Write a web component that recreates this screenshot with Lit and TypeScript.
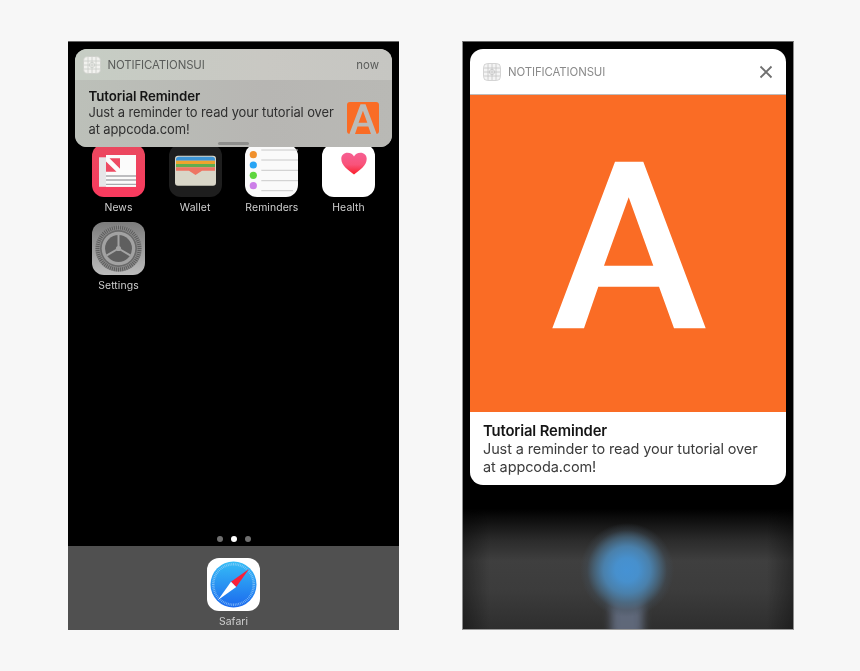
import { LitElement, html, css, svg } from "lit";
import { customElement } from "lit/decorators.js";

const logoA = (fill: string) => svg`<path fill=${fill} fill-rule="evenodd" d="M615 161.700H643.300L705.700 328.300H674L659 286.700H598.300L584 328.300H552.300ZM628.700 197.300L604 265.700H653.300Z"/>`;

const gridIcon = (stroke: string, bg: string) => html`<svg class="app-ico" viewBox="0 0 18 18">
  <rect x=".5" y=".5" width="17" height="17" rx="4" fill=${bg} stroke=${stroke} stroke-width=".7"/>
  <g fill="none" stroke=${stroke} stroke-width=".8">
    <path d="M5 1V17M9 1V17M13 1V17M1 5H17M1 9H17M1 13H17"/>
    <circle cx="9" cy="9" r="2.6"/>
  </g>
</svg>`;

const ticks = (cx: number, cy: number, r1: number, r2: number, n: number, color: string, w: number) => {
  const out = [];
  for (let i = 0; i < n; i++) {
    const a = (i / n) * Math.PI * 2;
    out.push(svg`<line x1=${cx + Math.cos(a) * r1} y1=${cy + Math.sin(a) * r1} x2=${cx + Math.cos(a) * r2} y2=${cy + Math.sin(a) * r2} stroke=${color} stroke-width=${w}/>`);
  }
  return out;
};

const news = html`<svg class="ico" viewBox="0 0 53 53">
  <defs><linearGradient id="ng" x1="0" y1="0" x2="0" y2="1"><stop offset="0" stop-color="#e9495f"/><stop offset="1" stop-color="#f93a5e"/></linearGradient></defs>
  <rect width="53" height="53" rx="12" fill="url(#ng)"/>
  <rect x="7" y="13.300" width="37" height="29.500" fill="#e6e6e8"/>
  <rect x="14" y="11" width="30" height="31.800" fill="#fbfbfb"/>
  <path d="M14 17.500L24.500 27.700H14ZM17.500 14.300H28V24.800Z" fill="#ee4a63"/>
  <path d="M14 32H44M14 36H44M14 40.300H44" stroke="#a9a9ad" stroke-width="1.300"/>
</svg>`;

const wallet = html`<svg class="ico" viewBox="0 0 53 53">
  <rect width="53" height="53" rx="12" fill="#1e1e1e"/>
  <rect x="6" y="11.700" width="41" height="30" rx="3" fill="#d9d6c8"/>
  <path d="M7 16.700V15.500Q7 12.700 10 12.700H43Q46 12.700 46 15.500V16.700Z" fill="#3e95d5"/>
  <rect x="7" y="16.700" width="39" height="3.300" fill="#efa42e"/>
  <rect x="7" y="20" width="39" height="3.300" fill="#62ad4f"/>
  <path d="M7 23.300H46V26.700H33L26.500 31L20 26.700H7Z" fill="#ee7563"/>
</svg>`;

const reminders = html`<svg class="ico" viewBox="0 0 53 53">
  <rect width="53" height="53" rx="12" fill="#fafafa"/>
  <path d="M16.300 6H53M16.300 16H53M16.300 26.300H53M16.300 36.700H53M16.300 46.700H48" stroke="#c4c4c4" stroke-width=".9"/>
  <circle cx="8.300" cy="10.700" r="3.600" fill="#f0902c"/>
  <circle cx="8.300" cy="21" r="3.600" fill="#28a4f4"/>
  <circle cx="8.300" cy="31.300" r="3.600" fill="#5ed53e"/>
  <circle cx="8.300" cy="41.700" r="3.600" fill="#cc7ee8"/>
</svg>`;

const health = html`<svg class="ico" viewBox="0 0 53 53">
  <defs><linearGradient id="hg" x1="0" y1="0" x2="0" y2="1"><stop offset="0" stop-color="#f65f93"/><stop offset=".55" stop-color="#f9537a"/><stop offset="1" stop-color="#fb1e2a"/></linearGradient></defs>
  <rect width="53" height="53" rx="12" fill="#fff"/>
  <path d="M32 30.500C26 26 19.300 21.500 19.300 14.800C19.300 11 22 8.700 25.500 8.700C28.500 8.700 31 10 32 12.500C33 10 35.500 8.700 38.500 8.700C42 8.700 44.700 11 44.700 14.800C44.700 21.500 38 26 32 30.500Z" fill="url(#hg)"/>
</svg>`;

const settings = html`<svg class="ico" viewBox="0 0 53 53">
  <defs><linearGradient id="sg" x1="0" y1="0" x2="0" y2="1"><stop offset="0" stop-color="#7c7c7c"/><stop offset="1" stop-color="#bcbcbc"/></linearGradient></defs>
  <rect width="53" height="53" rx="12" fill="url(#sg)"/>
  <circle cx="26.500" cy="26.500" r="23.300" fill="#8f8f8f"/>
  ${ticks(26.5, 26.5, 19, 23, 64, "#5e5e5e", 1.1)}
  <circle cx="26.500" cy="26.500" r="18.500" fill="#6a6a6a"/>
  <circle cx="26.500" cy="26.500" r="16.800" fill="#a2a2a2"/>
  <circle cx="26.500" cy="26.500" r="13.500" fill="#5f5f5f"/>
  <path d="M26.500 26.500V13M26.500 26.500L14.800 33.300M26.500 26.500L38.200 33.300" stroke="#a4a4a4" stroke-width="2"/>
  <circle cx="26.500" cy="26.500" r="2.600" fill="#a4a4a4"/>
</svg>`;

const safari = html`<svg class="ico" viewBox="0 0 53 53">
  <defs><linearGradient id="bg" x1="0" y1="0" x2="0" y2="1"><stop offset="0" stop-color="#36bdf6"/><stop offset="1" stop-color="#1b69ee"/></linearGradient></defs>
  <rect width="53" height="53" rx="12" fill="#fff"/>
  <circle cx="26.500" cy="26.500" r="23" fill="url(#bg)"/>
  ${ticks(26.5, 26.5, 19, 21.5, 72, "#a9d6f8", 0.6)}
  <polygon points="42,11 24,23.800 29.200,29" fill="#f8203a"/>
  <polygon points="11,42 24,23.800 29.200,29" fill="#fff"/>
</svg>`;

@customElement("app-root")
export class AppRoot extends LitElement {
  static styles = css`
    :host { display: block; }
    .page {
      width: 860px; height: 671px; box-sizing: border-box;
      background: #f7f7f7; display: flex; gap: 63px;
      padding: 41px 0 0 68px;
      font-family: Inter, "Liberation Sans", sans-serif;
      filter: blur(0.3px);
    }
    .phone {
      width: 331px; height: 589px; box-sizing: border-box;
      border-top: 1px solid #666; background: #000;
      display: flex; flex-direction: column; position: relative; overflow: hidden;
    }
    .phone.framed {
      width: 332px;
      border-left: 1px solid #8c8c8c; border-right: 1px solid #8c8c8c; border-bottom: 1px solid #9a9a9a;
    }
    .banner {
      position: absolute; left: 7px; top: 7px; width: 317px; height: 98px;
      border-radius: 12px; overflow: hidden; z-index: 2;
      background: #b9b9b5; display: flex; flex-direction: column;
    }
    .bhead {
      height: 31px; flex: none; display: flex; align-items: center; gap: 7px;
      padding: 0 13px 0 7.500px; box-sizing: border-box;
      background: linear-gradient(90deg, #c6cdc4 0%, #c9c8c3 60%, #c6c6c2 100%);
      color: #5a5c5a; font-size: 11.400px;
    }
    .bhead .name { flex: 1; letter-spacing: -0.1px; }
    .bbody {
      flex: 1; display: flex; align-items: center; gap: 10px; padding: 0 13px 2px 13.500px;
      background: linear-gradient(90deg, #bcc0b9 0%, #b7b6b3 60%, #b9b9b5 100%);
    }
    .btext { flex: 1; font-size: 12.950px; line-height: 16.500px; color: #2f2f2f; letter-spacing: -0.1px; white-space: nowrap; }
    .btext b { font-size: 13.300px; font-weight: 600; color: #151515; display: block; }
    .ctext b { font-size: 14.800px; font-weight: 600; color: #151515; display: block; }
    .thumb { width: 32px; height: 32px; flex: none; border-radius: 3px; display: block; margin-top: 10px; background: #fa6c25; }
    .grabber {
      position: absolute; left: 143px; bottom: 2px; width: 31px; height: 3px;
      border-radius: 2px; background: #8e8e8c;
    }
    .home { flex: 1; display: flex; flex-direction: column; padding-top: 102px; }
    .grid {
      display: grid; grid-template-columns: repeat(4, 53px); column-gap: 23.700px; row-gap: 0;
      padding-left: 24px; flex: 1; align-content: start;
    }
    .app { width: 53px; height: 78px; display: flex; flex-direction: column; align-items: center; }
    .ico { width: 53px; height: 53px; display: block; flex: none; }
    .label {
      font-size: 10.400px; line-height: 14px; margin-top: 4px; color: #cfcfcf; white-space: nowrap;
      letter-spacing: 0.1px;
    }
    .dots { display: flex; justify-content: center; gap: 8px; height: 10px; }
    .dot { width: 6px; height: 6px; border-radius: 50%; background: #6f6f6f; }
    .dot.on { background: #fff; }
    .dock {
      height: 84px; flex: none; background: #505050; box-sizing: border-box;
      padding-top: 12px; display: flex; justify-content: center;
    }
    .dock .app { height: auto; }
    .card {
      position: relative; margin: 7px 7px 0; width: 316px; height: 436px; flex: none;
      border-radius: 13px; overflow: hidden; background: #fff;
      display: flex; flex-direction: column;
    }
    .chead {
      height: 45px; flex: none; display: flex; align-items: center; gap: 7px;
      padding: 0 13px; color: #8a8a8a; font-size: 11.400px;
      border-bottom: 1px solid #bcbcbc;
    }
    .chead .name { flex: 1; letter-spacing: -0.1px; }
    .close { width: 14px; height: 14px; display: block; }
    .hero { width: 316px; height: 317px; display: block; flex: none; background: #fa6c25; }
    .ctext { padding: 9.500px 13px 0 13px; font-size: 14.500px; line-height: 18px; color: #3c3c3c; letter-spacing: -0.12px; white-space: nowrap; }
    .app-ico { width: 18px; height: 18px; flex: none; display: block; }
    .glow {
      flex: 1; position: relative;
      background:
        linear-gradient(90deg, rgba(0,0,0,.35), rgba(0,0,0,0) 8%, rgba(0,0,0,0) 92%, rgba(0,0,0,.35)),
        linear-gradient(180deg, #000 0, #000 24px, #2b2b2b 55px, #3f3f3f 76px, #3c3c3c 105px, #2e2e2e 145px);
    }
    .stem {
      position: absolute; left: 148px; top: 90px; bottom: -10px; width: 32px;
      background: linear-gradient(180deg, #5f6a7e, #5f6778);
      filter: blur(4px);
    }
    .orb {
      position: absolute; left: 117px; top: 38px; width: 94px; height: 94px; border-radius: 50%;
      background: radial-gradient(circle closest-side, #4592d4 0%, #4790cd 25%, #4a80ab 50%, rgba(72,105,130,.8) 70%, rgba(66,80,92,.4) 85%, rgba(64,70,76,0) 100%);
    }
  `;

  private app(icon: unknown, label: string) {
    return html`<div class="app">${icon}<span class="label">${label}</span></div>`;
  }

  render() {
    return html`<div class="page">
      <section class="phone">
        <div class="banner">
          <div class="bhead">
            ${gridIcon("#c8ccc6", "#f2f2ef")}
            <span class="name">NOTIFICATIONSUI</span><span>now</span>
          </div>
          <div class="bbody">
            <div class="btext"><b>Tutorial Reminder</b>Just a reminder to read your tutorial over<br />at appcoda.com!</div>
            <svg class="thumb" viewBox="539 148.500 180 180">${logoA("#bbbbb8")}</svg>
          </div>
          <div class="grabber"></div>
        </div>
        <div class="home">
          <div class="grid">
            ${this.app(news, "News")}
            ${this.app(wallet, "Wallet")}
            ${this.app(reminders, "Reminders")}
            ${this.app(health, "Health")}
            ${this.app(settings, "Settings")}
          </div>
          <div class="dots"><span class="dot"></span><span class="dot on"></span><span class="dot"></span></div>
          <div class="dock">${this.app(safari, "Safari")}</div>
        </div>
      </section>
      <section class="phone framed">
        <div class="card">
          <div class="chead">
            ${gridIcon("#c4c4c4", "#f4f4f4")}
            <span class="name">NOTIFICATIONSUI</span>
            <svg class="close" viewBox="0 0 14 14"><path d="M1.500 1.500L12.500 12.500M12.500 1.500L1.500 12.500" stroke="#6f6f6f" stroke-width="1.800" fill="none"/></svg>
          </div>
          <svg class="hero" viewBox="470 95 316 317" preserveAspectRatio="none">${logoA("#fff")}</svg>
          <div class="ctext"><b>Tutorial Reminder</b>Just a reminder to read your tutorial over<br />at appcoda.com!</div>
        </div>
        <div class="glow"><div class="stem"></div><div class="orb"></div></div>
      </section>
    </div>`;
  }
}
